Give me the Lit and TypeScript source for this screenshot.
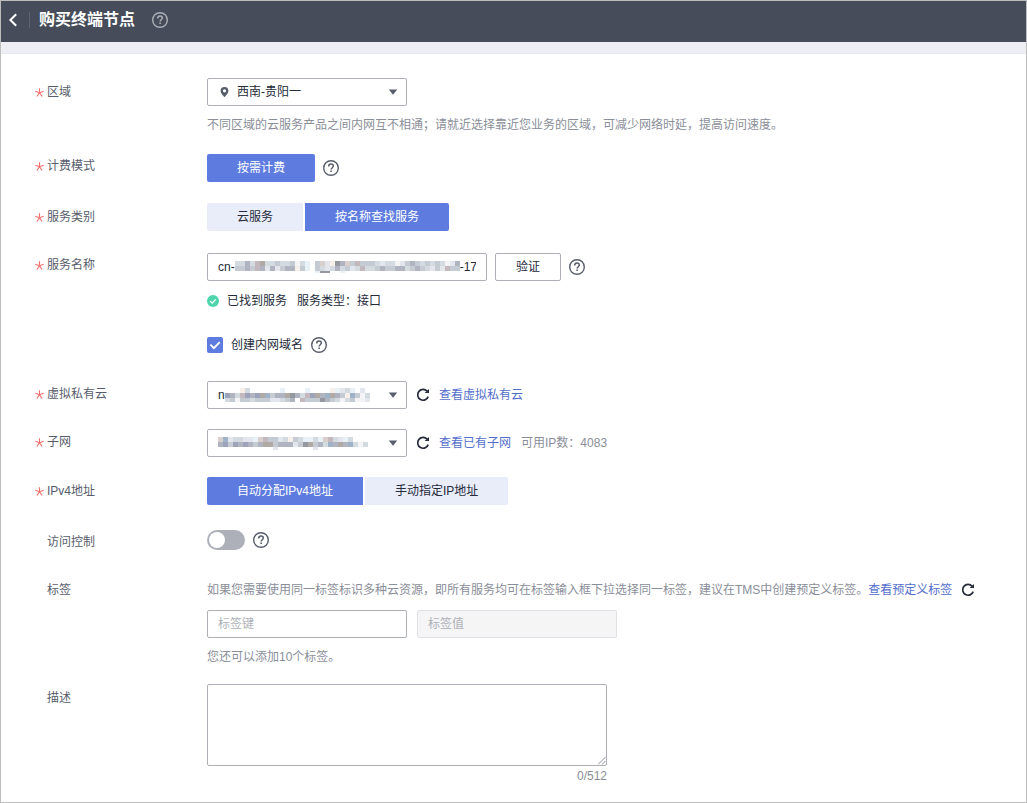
import { LitElement, html, svg, css } from "lit";
import { customElement, property } from "lit/decorators.js";

const helpIcon = (cls = "help") => html`<svg class=${cls} width="18" height="18" viewBox="0 0 18 18" fill="none" stroke="currentColor">
  <circle cx="9" cy="9" r="7.3" stroke-width="1.4"></circle>
  <path d="M6.7 7.4C6.7 5.9 7.7 5.1 9 5.1s2.3.8 2.3 2c0 1.6-2.2 1.7-2.2 3.5" stroke-width="1.5"></path>
  <path d="M8.3 12.2h1.6" stroke-width="1.6"></path>
</svg>`;

const refreshIcon = html`<svg class="refresh" width="14" height="14" viewBox="0 0 14 14" fill="none">
  <path d="M11.2 3.3A5.4 5.4 0 1 0 12.2 8.6" stroke="#252b3a" stroke-width="1.7"></path>
  <path d="M13 .9V5H8.6z" fill="#252b3a"></path>
</svg>`;

const caret = html`<svg class="caret" width="10" height="6" viewBox="0 0 10 6"><path d="M.8.5h8.4L5 5.7z" fill="#575d6c"></path></svg>`;

/* Masked values: rows of 5px cells, "." leaves a cell clear. */
const TONES: Record<string, string> = {
  a: "#9ca3bb", b: "#b0b3c0", c: "#c5cbd3", d: "#d3dae0", e: "#e4e6ed", f: "#f4f4f6",
  g: "#b0aaa7", h: "#c3b8bd", i: "#d9cfcc", j: "#f7efe9", k: "#a0b2c8", l: "#e8f1f5", m: "#9698a0",
};
interface Mask { rows: string[]; heights: number[] }

const mosaic = ({ rows, heights }: Mask) => {
  let y = 0;
  const width = Math.max(...rows.map((r) => r.length)) * 5;
  const total = heights.reduce((s, h) => s + h, 0);
  const cells = rows.map((row, r) => {
    const top = y;
    y += heights[r];
    return [...row].map((t, i) =>
      t === "." ? "" : svg`<rect x=${i * 5} y=${top} width="5" height=${heights[r]} fill=${TONES[t]}></rect>`);
  });
  return html`<svg class="mosaic" width=${width} height=${total} shape-rendering="crispEdges">${cells}</svg>`;
};

const SERVICE: Mask = {
  heights: [5, 5, 2],
  rows: [
    "ddbdhgddcddcfdl.ciejmbichcccdeddfecbcdcdcdfeb",
    "ccbchbebecbbjcl.cdedbdcedhddcbccbbdcbcdecehcc",
    "................lm..l........................".replace("lm", "lmm").slice(0, 45),
  ],
};
const VPC: Mask = {
  heights: [5, 5, 4],
  rows: [
    "...jd......l....l....jledl.e....",
    "abdhabagkcbbgmbdhagbkgbcjkcfdff.".replace("ff.", "..."),
    "dcfccdccceedcb.hcccmbcdfdcffeeff".slice(0, 29),
  ],
};
const SUBNET: Mask = {
  heights: [5, 5, 3],
  rows: [
    "ikeddeelihccedjcdlldlihdeld...",
    "bacababcbggcbbbecmgcbdkbgbkdfdff",
    "...........e.......e..........",
  ].map((r) => r.slice(0, 30)),
};

@customElement("form-row")
class FormRow extends LitElement {
  @property() label = "";
  @property({ type: Boolean }) required = false;
  static styles = css`
    :host { display: grid; grid-template-columns: 12px 160px 1fr; align-items: start; }
    .star { color: #f66f6a; height: 20px; padding-top: var(--label-top, 4px); }
    .star svg { display: block; margin-top: 6px; }
    .label { color: #575d6c; line-height: 20px; padding-top: var(--label-top, 4px); }
  `;
  render() {
    return html`
      <div class="star">${this.required
        ? html`<svg width="9" height="9" viewBox="0 0 9 9" stroke="currentColor" stroke-width="1.1"><path d="M4.5.3v4.4M.3 3.2l4.2 1.5 4.2-1.5M1.9 8.5l2.6-3.8 2.6 3.8" fill="none"></path></svg>`
        : ""}</div>
      <div class="label">${this.label}</div>
      <div><slot></slot></div>`;
  }
}

@customElement("app-root")
class AppRoot extends LitElement {
  static styles = css`
    :host {
      display: block; box-sizing: border-box; width: 1027px; height: 803px; overflow: hidden;
      border: 1px solid #bdbdbd; background: #fff; color: #252b3a;
      font: 12px/20px "Liberation Sans", "Noto Sans CJK SC", sans-serif;
    }
    * { box-sizing: border-box; }
    svg { display: block; flex: none; }
    header { height: 41px; background: #464c59; display: flex; align-items: center; padding: 0 0 4px 7px; color: #fff; }
    .divider { width: 1px; height: 16px; background: #5c6373; margin: 0 9px 0 11px; }
    h1 { font-size: 16px; line-height: 24px; margin: 0 16px 0 0; font-weight: 700; }
    .help { color: #575d6c; }
    .help-head { color: #adb0b8; }
    .strip { height: 12px; background: #eeeff5; border-bottom: 1px solid #e6e7ee; }
    main { padding: 24px 0 0 34px; }
    .line { display: flex; align-items: center; }
    .hint { color: #8a8e99; white-space: nowrap; }
    .select, .input, .plain, textarea {
      border: 1px solid #adb0b8; border-radius: 2px; background: #fff; height: 28px;
    }
    .select { width: 200px; display: flex; align-items: center; padding: 0 8px 0 10px; }
    .select .caret { margin-left: auto; }
    .pin { margin: 0 7px 0 1px; }
    .input { width: 280px; display: flex; align-items: center; padding: 0 10px; overflow: hidden; }
    .clip { display: flex; align-items: center; overflow: hidden; width: 258px; white-space: nowrap; }
    .plain { width: 66px; text-align: center; line-height: 26px; margin: 0 7px 0 8px; }
    .tabs { display: flex; gap: 2px; }
    .tab { height: 28px; line-height: 28px; padding: 0 30px; background: #e9edfa; white-space: nowrap; }
    .tab.on { background: #5e7ce0; color: #fff; }
    .tab:first-child { border-radius: 2px 0 0 2px; }
    .tab:last-child { border-radius: 0 2px 2px 0; }
    .tab:only-child { border-radius: 2px; }
    a { color: #526ecc; white-space: nowrap; }
    .refresh { margin: 0 9px; }
    .check { margin-right: 8px; }
    .switch { width: 38px; height: 20px; border-radius: 10px; background: #adb0b8; padding: 2px; margin-right: 7px; }
    .knob { width: 16px; height: 16px; border-radius: 50%; background: #fff; }
    .tag { width: 200px; height: 28px; border: 1px solid #adb0b8; border-radius: 2px; padding: 0 10px; line-height: 26px; color: #adb0b8; }
    .tag.off { background: #f5f5f6; border-color: #dfe1e6; }
    .fields { display: flex; gap: 10px; }
    .area { width: 400px; height: 82px; border: 1px solid #adb0b8; border-radius: 2px; display: flex; align-items: flex-end; justify-content: flex-end; }
    .count { width: 400px; text-align: right; color: #8a8e99; }
    .region { height: 76px; --label-top: 4px; }
    .region .hint { margin-top: 9px; }
    .billing { height: 49px; --label-top: 2px; }
    .category { height: 50px; }
    .service { height: 128px; --label-top: 2px; }
    .found { margin-top: 10px; }
    .found span { margin-right: 10px; }
    .domain { margin-top: 24px; }
    .vpc, .subnet { height: 48px; --label-top: 3px; }
    .ip { height: 53px; }
    .acl { height: 50px; --label-top: 2px; }
    .tags { height: 104px; --label-top: -0px; }
    .tags .fields { margin: 10px 0 9px; }
    .mosaic { margin-top: 0; }
  `;

  render() {
    return html`
      <header>
        <svg width="10" height="14" viewBox="0 0 10 14" fill="none"><path d="M8.2 1.3L2.4 7l5.8 5.7" stroke="#fff" stroke-width="2"></path></svg>
        <div class="divider"></div>
        <h1>购买终端节点</h1>
        ${helpIcon("help-head")}
      </header>
      <div class="strip"></div>
      <main>
        <form-row class="region" label="区域" required>
          <div class="select">
            <svg class="pin" width="11" height="12" viewBox="0 0 11 12"><path fill-rule="evenodd" d="M5.5 1A3.9 3.9 0 0 0 1.6 4.9C1.6 7.4 5.5 11 5.5 11S9.4 7.4 9.4 4.9A3.9 3.9 0 0 0 5.5 1zm0 2.2a1.6 1.6 0 1 1 0 3.3 1.6 1.6 0 0 1 0-3.3z" fill="#575d6c"></path></svg>
            <span>西南-贵阳一</span>${caret}
          </div>
          <div class="hint">不同区域的云服务产品之间内网互不相通；请就近选择靠近您业务的区域，可减少网络时延，提高访问速度。</div>
        </form-row>

        <form-row class="billing" label="计费模式" required>
          <div class="line" style="gap:7px"><div class="tabs"><div class="tab on">按需计费</div></div>${helpIcon("help up")}</div>
        </form-row>

        <form-row class="category" label="服务类别" required>
          <div class="tabs"><div class="tab">云服务</div><div class="tab on">按名称查找服务</div></div>
        </form-row>

        <form-row class="service" label="服务名称" required>
          <div class="line">
            <div class="input"><div class="clip"><span>cn-</span>${mosaic(SERVICE)}<span>-170</span></div></div>
            <div class="plain">验证</div>${helpIcon()}
          </div>
          <div class="line found">
            <svg width="12" height="12" viewBox="0 0 12 12" style="margin-right:8px"><circle cx="6" cy="6" r="6" fill="#50d4ab"></circle><path d="M3.2 6.1l2 2 3.6-3.7" fill="none" stroke="#fff" stroke-width="1.2"></path></svg>
            <span>已找到服务</span><span>服务类型：接口</span>
          </div>
          <div class="line domain">
            <svg class="check" width="16" height="16" viewBox="0 0 16 16"><rect width="16" height="16" rx="2" fill="#5e7ce0"></rect><path d="M3.4 7.6l3.5 3.6 5.8-6" fill="none" stroke="#fff" stroke-width="1.9"></path></svg>
            <span style="margin-right:7px">创建内网域名</span>${helpIcon()}
          </div>
        </form-row>

        <form-row class="vpc" label="虚拟私有云" required>
          <div class="line">
            <div class="select"><div class="clip" style="width:152px"><span class="cut">n</span>${mosaic(VPC)}</div>${caret}</div>
            ${refreshIcon}<a>查看虚拟私有云</a>
          </div>
        </form-row>

        <form-row class="subnet" label="子网" required>
          <div class="line">
            <div class="select">${mosaic(SUBNET)}${caret}</div>
            ${refreshIcon}<a>查看已有子网</a><span class="hint" style="margin-left:10px">可用IP数：4083</span>
          </div>
        </form-row>

        <form-row class="ip" label="IPv4地址" required>
          <div class="tabs"><div class="tab on">自动分配IPv4地址</div><div class="tab">手动指定IP地址</div></div>
        </form-row>

        <form-row class="acl" label="访问控制">
          <div class="line"><div class="switch"><div class="knob"></div></div>${helpIcon()}</div>
        </form-row>

        <form-row class="tags" label="标签">
          <div class="line"><span class="hint">如果您需要使用同一标签标识多种云资源，即所有服务均可在标签输入框下拉选择同一标签，建议在TMS中创建预定义标签。</span><a>查看预定义标签</a>${refreshIcon}</div>
          <div class="fields"><div class="tag">标签键</div><div class="tag off">标签值</div></div>
          <div class="hint">您还可以添加10个标签。</div>
        </form-row>

        <form-row class="desc" label="描述">
          <div class="area"><svg width="8" height="8" viewBox="0 0 8 8" stroke="#8a8e99" stroke-width="1"><path d="M0 7.5L7.5 0M4 7.5L7.5 4"></path></svg></div>
          <div class="count">0/512</div>
        </form-row>
      </main>
    `;
  }
}
